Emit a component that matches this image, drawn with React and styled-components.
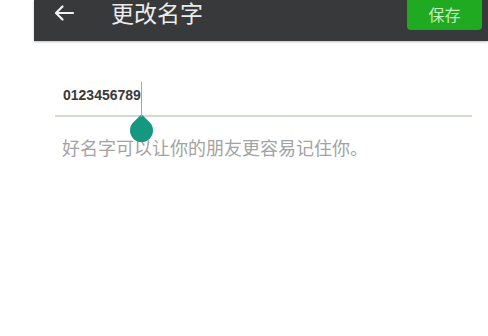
import React from 'react';
import styled, { createGlobalStyle } from 'styled-components';

const GlobalStyle = createGlobalStyle`
    html, body {
        margin: 0;
        padding: 0;
        background: #ffffff;
    }
    body {
        font-family: "Noto Sans CJK SC", "Noto Sans", sans-serif;
    }
`;

const Page = styled.div`
    width: 488px;
    height: 336px;
    overflow: hidden;
    background: #ffffff;
`;

const Header = styled.header`
    display: flex;
    align-items: flex-start;
    height: 41px;
    margin-left: 34px;
    background: #38393a;
    box-shadow: 0 1px 2px rgba(0, 0, 0, 0.25);
`;

const BackButton = styled.button`
    display: flex;
    padding: 0;
    margin: 5px 0 0 20px;
    border: none;
    background: transparent;
    cursor: pointer;
`;

const Title = styled.h1`
    margin: 0 0 0 37px;
    font-size: 23px;
    font-weight: 400;
    line-height: 25px;
    color: #ececec;
`;

const SaveButton = styled.button`
    margin: 0 6px 0 auto;
    width: 75px;
    height: 30px;
    padding: 0 0 2px;
    border: none;
    border-radius: 0 0 4px 4px;
    background: #1faa22;
    color: #c6efbf;
    font-family: "Noto Sans CJK SC", sans-serif;
    font-size: 16px;
    line-height: 28px;
    cursor: pointer;
`;

const Form = styled.div`
    padding: 41px 16px 0 55px;
`;

const Field = styled.div`
    display: flex;
    height: 33px;
    padding-left: 8px;
    border-bottom: 2px solid #d3dccc;
`;

const Value = styled.span`
    position: relative;
    align-self: stretch;
    padding-top: 5px;
    font-family: "Liberation Sans", Arial, sans-serif;
    font-size: 14px;
    font-weight: 700;
    line-height: 16px;
    color: #3a3a3a;

    &::after {
        content: '';
        position: absolute;
        top: 0;
        bottom: -2px;
        right: -1px;
        width: 1px;
        background: #86b6a8;
    }
`;

const Handle = styled.span`
    position: absolute;
    right: -12px;
    top: 100%;
    margin-top: 4px;
    width: 23px;
    height: 23px;
    background: #16977f;
    border-radius: 0 50% 50% 50%;
    transform: rotate(45deg);
`;

const Hint = styled.p`
    margin: 20px 0 0;
    padding-left: 7px;
    font-size: 18px;
    line-height: 21px;
    color: #a3a3a3;
`;

const ArrowLeft = () => (
    <svg width="20" height="16" viewBox="0 0 20 16" fill="none">
        <path
            d="M19 8H2.5M8.5 1.5L2 8l6.5 6.5"
            stroke="#f2f2f2"
            strokeWidth="2.2"
            strokeLinecap="round"
            strokeLinejoin="round"
        />
    </svg>
);

const App = () => (
    <Page>
        <GlobalStyle />
        <Header>
            <BackButton aria-label="back">
                <ArrowLeft />
            </BackButton>
            <Title>更改名字</Title>
            <SaveButton>保存</SaveButton>
        </Header>
        <Form>
            <Field>
                <Value>
                    0123456789
                    <Handle />
                </Value>
            </Field>
            <Hint>好名字可以让你的朋友更容易记住你。</Hint>
        </Form>
    </Page>
);

export default App;
